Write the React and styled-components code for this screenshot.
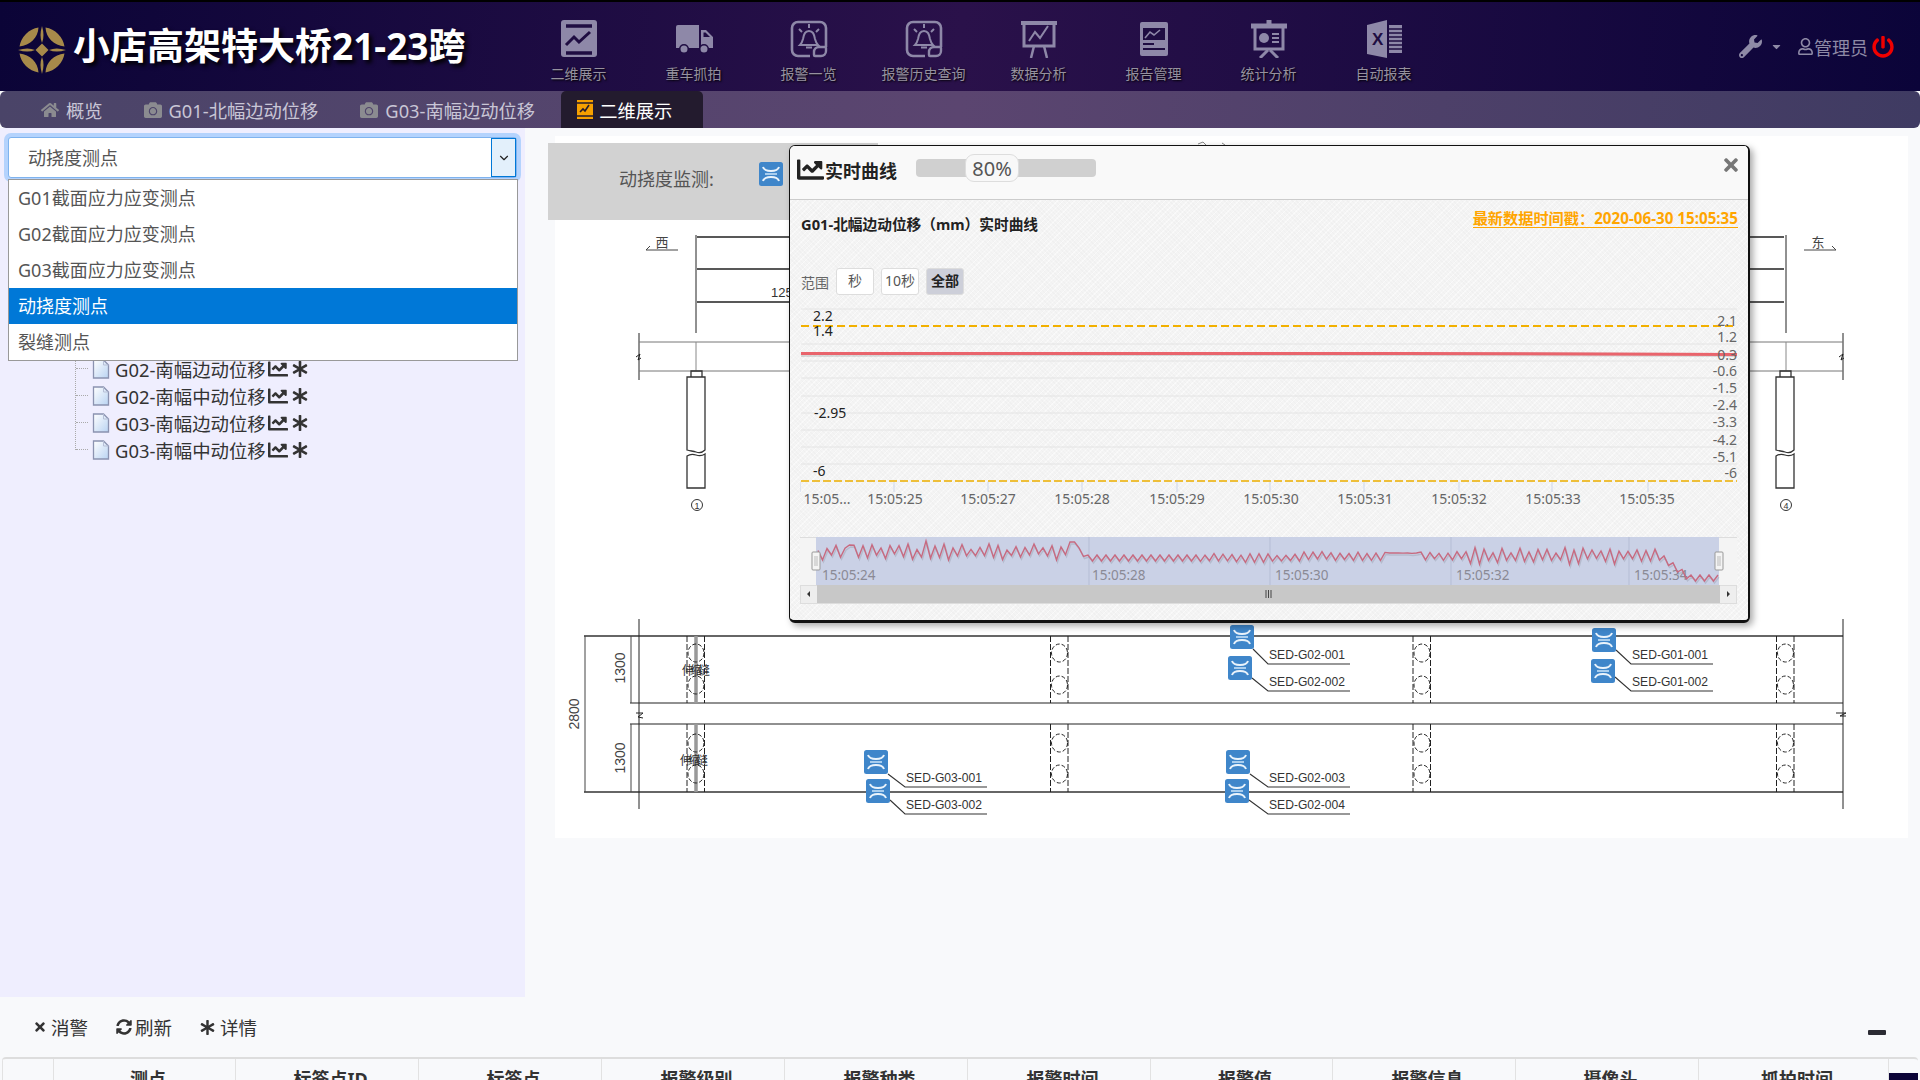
import React from "react";
import styled, { createGlobalStyle } from "styled-components";
import { FaHome, FaCamera, FaWrench, FaCaretDown, FaRegUser, FaPowerOff, FaChartLine, FaAsterisk, FaTimes, FaSyncAlt } from "react-icons/fa";
import { ChevronDown } from "lucide-react";

const FONT = `"Noto Sans", "Noto Sans CJK SC", sans-serif`;

const Global = createGlobalStyle`
  html, body { margin: 0; padding: 0; height: 100%; overflow: hidden; background: #f8f9fb; }
  body { font-family: ${FONT}; color: #333; }
  * { box-sizing: border-box; }
`;

const Page = styled.div`
  width: 1920px; height: 1080px; overflow: hidden; display: flex; flex-direction: column; background: #f8f9fb;
`;
const Header = styled.header`
  height: 91px; flex: none; border-top: 2px solid #000; display: flex; align-items: flex-start;
  background: linear-gradient(95deg, #0b0437 0%, #2a114a 50%, #0b0439 100%);
`;
const Brand = styled.div`
  width: 561px; flex: none; display: flex; align-items: center; gap: 7px; padding: 24px 0 0 18px;
`;
const Title = styled.h1`
  margin: -9px 0 0; font-size: 37px; line-height: 42px; font-weight: 700; color: #fff; white-space: nowrap;
  text-shadow: 3px 3px 4px #000;
`;
const Nav = styled.nav`
  display: flex; flex: none;
`;
const NavItem = styled.div`
  width: 115px; height: 89px; display: flex; flex-direction: column; align-items: center; padding-top: 18px; margin-left: ${p => p.$first ? "-40px" : "0"};
  color: #8e88a8;
`;
const NavLabel = styled.span`
  margin-top: 6px; font-size: 14px; line-height: 20px; color: #96919f; text-shadow: 1px 1px 2px #000; white-space: nowrap;
`;
const UserArea = styled.div`
  margin-left: auto; display: flex; align-items: center; height: 89px; padding: 0 26px 0 0; color: #8e8aa6;
`;
const Caret = styled.span`
  display: flex; margin: 0 14px 0 8px; font-size: 13px; color: #8e8aa6;
`;
const UserName = styled.span`
  font-size: 18px; margin-right: 4px; color: #8e8aa6;
`;
const TabBar = styled.div`
  height: 37px; flex: none; display: flex; align-items: stretch; padding-left: 41px; border-radius: 6px;
  background: linear-gradient(95deg, #4a4468 0%, #5b4570 50%, #3f3b62 100%);
`;
const Tab = styled.div`
  display: flex; align-items: center; font-size: 18.3px; gap: 7px; color: #c9c6d6; white-space: nowrap;
  margin-left: ${p => p.$ml || 0}px;
`;
const TabIcon = styled.span`
  display: flex; color: #8b8b90; font-size: 18px;
`;
const ActiveTab = styled.div`
  width: 142px; display: flex; align-items: center; gap: 6px; padding-left: 16px; font-size: 18.3px; color: #fff;
  background: #231b2e; border-radius: 5px 5px 0 0; margin-left: 26px;
`;
const Body = styled.div`
  height: 869px; flex: none; display: flex;
`;
const Left = styled.aside`
  width: 525px; flex: none; background: #efeefe; position: relative; padding: 9px 8px 0 8px;
`;
const SelectBox = styled.div`
  height: 41px; width: 509px; background: #fff; border: 1px solid #7fb3ee; border-radius: 3px; box-shadow: 0 0 0 4px #b4d3fd;
  display: flex; align-items: center; justify-content: space-between; padding: 0 0 2px 19px; font-size: 18px; color: #555;
`;
const SelectArrow = styled.span`
  width: 25px; height: 39px; margin-bottom: -2px; background: #e3f0fb; border: 1px solid #0078d7; display: flex; align-items: center; justify-content: center; color: #222;
`;
const Dropdown = styled.ul`
  position: absolute; left: 8px; top: 51px; width: 510px; margin: 0; padding: 0; list-style: none; background: #fff; border: 1px solid #999; z-index: 3;
`;
const Option = styled.li`
  height: 36px; line-height: 36px; padding-left: 9px; font-size: 18px; color: ${p => p.$selected ? "#fff" : "#555"};
  background: ${p => p.$selected ? "#0078d7" : "#fff"};
`;
const Tree = styled.ul`
  list-style: none; margin: 177px 0 0; padding: 0 0 0 67px; position: relative;
  &::before { content: ""; position: absolute; left: 67px; top: -10px; bottom: 13px; border-left: 1px dotted #aaa; }
`;
const TreeRow = styled.li`
  height: 27px; display: flex; align-items: center; padding-left: 17px; position: relative; font-size: 18.4px; color: #333; white-space: nowrap;
  &::before { content: ""; position: absolute; left: 1px; top: 13px; width: 12px; border-top: 1px dotted #aaa; }
`;
const TreeLabel = styled.span`
  margin: 0 2px 0 5px;
`;
const TreeAction = styled.span`
  display: flex; margin-left: ${p => p.$ml || 0}px; font-size: ${p => p.$size}px; color: #333;
`;
const Main = styled.main`
  flex: 1; position: relative; padding: 8px 12px 0 30px;
`;
const Drawing = styled.div`
  width: 1353px; height: 702px; background: #fff;
  svg { display: block; }
`;
const MonitorBar = styled.div`
  position: absolute; left: 23px; top: 15px; width: 330px; height: 77px; background: #d2d2d2; display: flex; align-items: flex-start; padding: 19px 0 0 71px; gap: 45px; font-size: 18px; color: #555;
`;
const MonitorLabel = styled.span`
  margin-top: 5px; line-height: 25px;
`;
const Modal = styled.section`
  position: absolute; left: 264px; top: 17px; width: 961px; height: 478px; z-index: 2; background: #f4f4f4;
  border: 1px solid #111; border-right-width: 2px; border-bottom-width: 3px; border-radius: 6px; overflow: hidden;
  box-shadow: 3px 3px 7px rgba(0,0,0,.35);
`;
const ModalWrap = styled.div`
  height: 100%; display: flex; flex-direction: column;
`;
const ModalHeader = styled.div`
  height: 54px; flex: none; background: #f9f9f9; border-bottom: 1px solid #ccc; display: flex; align-items: center; padding: 0 9px 6px 7px; position: relative;
`;
const ModalTitle = styled.div`
  display: flex; align-items: center; gap: 1px; font-size: 18px; font-weight: 700; color: #222; width: 119px;
`;
const SliderTrack = styled.div`
  width: 180px; height: 18px; background: #d0d0d0; border-radius: 4px; position: relative; margin-top: -3px;
`;
const SliderThumb = styled.div`
  position: absolute; left: 49px; top: -5px; width: 54px; height: 28px; background: #f8f8f8; border: 1px solid #ddd; border-radius: 9px;
  text-align: center; font-size: 20px; line-height: 27px; color: #555;
`;
const Close = styled.span`
  position: absolute; right: 7px; top: 9px; display: flex; color: #777; font-size: 20px;
`;
const ModalBody = styled.div`
  flex: 1; padding: 0 10px 0 11px;
  background-color: #f4f4f4;
  background-image: repeating-linear-gradient(45deg, rgba(0,0,0,.014) 0 1px, transparent 1px 3px), repeating-linear-gradient(-45deg, rgba(255,255,255,.5) 0 1px, transparent 1px 4px);
`;
const TitleRow = styled.div`
  display: flex; justify-content: space-between; height: 24px; margin-top: 8px;
`;
const ChartTitle = styled.div`
  font-size: 14.7px; font-weight: 700; color: #222; line-height: 32px; white-space: nowrap;
`;
const Stamp = styled.div`
  font-size: 15.2px; font-weight: 700; color: #ffa500; border-bottom: 1px solid #ffa500; line-height: 18px; height: 19px; margin-top: 1px; white-space: nowrap;
`;
const RangeRow = styled.div`
  display: flex; align-items: center; gap: 7px; height: 27px; margin-top: 36px; font-size: 14px; color: #666;
`;
const RangeButton = styled.span`
  width: 38px; height: 27px; border: 1px solid #ddd; border-radius: 3px; display: flex; align-items: center; justify-content: center; padding-bottom: 3px;
  background: ${p => p.$on ? "#cdcfd9" : "#fff"}; font-weight: ${p => p.$on ? 700 : 400}; color: ${p => p.$on ? "#222" : "#555"};
`;
const ChartBox = styled.div`
  margin: 5px 0 0 -1px;
  svg { display: block; }
`;
const Toolbar = styled.div`
  height: 60px; flex: none; position: relative; display: flex; align-items: center; padding: 0 0 0 33px; font-size: 18.5px; color: #333;
`;
const ToolButton = styled.span`
  display: flex; align-items: center; gap: ${p => p.$gap}px; margin-right: 28px;
`;
const Minimize = styled.span`
  position: absolute; right: 34px; top: 33px; width: 18px; height: 5px; background: #2b2b33; border-radius: 1px;
`;
const TableHead = styled.div`
  flex: none; height: 30px; margin: 0 2px; border-top: 2px solid #ddd; border-radius: 4px 4px 0 0; display: flex; position: relative; overflow: hidden;
`;
const Corner = styled.div`
  width: 52px; flex: none; border-right: 1px solid #e2e2e2; border-left: 1px solid #e2e2e2;
`;
const HeadCell = styled.div`
  width: ${p => p.$w}px; flex: none; border-right: 1px solid #e2e2e2; text-align: center; font-size: 18px; font-weight: 700; color: #333; line-height: 26px; padding: 7px 0 0 7px; height: 40px;
`;
const ScrollStub = styled.div`
  width: 29px; flex: none; background: #0b0437; margin-top: 14px;
`;

const NavIcon = ({ children }) => (
  <svg width="40" height="38" viewBox="0 0 40 38">{children}</svg>
);
const C = "#8e88a8", D = "#1f0d42";
const BellIcon = () => (
  <NavIcon>
    <path d="M21 36H9a6 6 0 0 1-6-6V8a6 6 0 0 1 6-6h22a6 6 0 0 1 6 6v19" fill="none" stroke={C} strokeWidth="2.6" />
    <path d="M26 36a1 1 0 0 1-1-1v-3a5 5 0 0 1 5-5h6a1 1 0 0 1 1 1v3a5 5 0 0 1-5 5z" fill="none" stroke={C} strokeWidth="2.4" />
    <path d="M20 11c-4 0-5 3-6 8-1 4-2 5-3 6h18c-1-1-2-2-3-6-1-5-2-8-6-8z" fill="none" stroke={C} strokeWidth="2" />
    <path d="M17 27.500h6M20 4v4M10 9l3 3M30 9l-3 3" stroke={C} strokeWidth="2" fill="none" />
  </NavIcon>
);
const Icons = [
  <NavIcon key="1"><rect x="2" y="0" width="36" height="37" rx="3" fill={C} /><path d="M7 6h26M7 33h26" stroke={D} strokeWidth="3.4" /><path d="M7 25l8-8 5 5 11-10" fill="none" stroke={D} strokeWidth="3" /></NavIcon>,
  <NavIcon key="2"><path d="M4 5h21v23H2V7a2 2 0 0 1 2-2zM27 10h5l7 7v11H27z" fill={C} /><circle cx="10" cy="29" r="4.300" fill={C} stroke={D} strokeWidth="1.6" /><circle cx="30" cy="29" r="4.300" fill={C} stroke={D} strokeWidth="1.6" /><path d="M29.500 12.500h2l4.500 4.500h-6.500z" fill={D} /></NavIcon>,
  <BellIcon key="3" />,
  <BellIcon key="4" />,
  <NavIcon key="5"><path d="M2 3h36" stroke={C} strokeWidth="4" /><path d="M5 5v21h30V5" fill="none" stroke={C} strokeWidth="3" /><path d="M10 21l6-9 5 6 8-12" fill="none" stroke={C} strokeWidth="2" /><path d="M15 26l-3 12M25 26l3 12" stroke={C} strokeWidth="2.5" /></NavIcon>,
  <NavIcon key="6"><rect x="6" y="2" width="28" height="34" rx="2" fill={C} /><rect x="9" y="8" width="22" height="12" fill={D} /><path d="M11 18l5-6 4 3 6-5" fill="none" stroke={C} strokeWidth="1.6" /><path d="M9 24h11M9 29h22" stroke={D} strokeWidth="2.2" /></NavIcon>,
  <NavIcon key="7"><path d="M20 0v5M2 6h36" stroke={C} strokeWidth="5" /><path d="M6 8v21h28V8" fill="none" stroke={C} strokeWidth="3" /><circle cx="15" cy="18" r="5" fill={C} /><path d="M23 14h7M23 18h7M23 22h7" stroke={C} strokeWidth="1.8" /><path d="M19 30l-8 8M21 30l8 8" stroke={C} strokeWidth="3" /></NavIcon>,
  <NavIcon key="8"><path d="M3 5l20-5v38l-20-4z" fill={C} /><path d="M25 5h13v28H25z" fill={C} /><path d="M25 9h13M25 13h13M25 17h13M25 21h13M25 25h13M25 29h13" stroke={D} strokeWidth="1.4" /><text x="8" y="25" fontFamily="Liberation Sans, sans-serif" fontSize="17" fontWeight="700" fill={D}>X</text></NavIcon>,
];
const NAV = ["二维展示", "重车抓拍", "报警一览", "报警历史查询", "数据分析", "报告管理", "统计分析", "自动报表"];

const LogoMark = () => (
  <svg width="48" height="48" viewBox="0 0 48 48">
    <g fill="#a78a4a">
      <path d="M20.500 1.500A23 23 0 0 0 1.500 20.500C12 19.500 20 12 20.500 1.500zM27.500 1.500A23 23 0 0 1 46.500 20.500C36 19.500 28 12 27.500 1.500zM20.500 46.500A23 23 0 0 1 1.500 27.500C12 28.500 20 36 20.500 46.500zM27.500 46.500A23 23 0 0 0 46.500 27.500C36 28.500 28 36 27.500 46.500z" />
      <path d="M24 0q3 10 0 17q-3-7 0-17zM24 48q3-10 0-17q-3 7 0 17zM0 24q10-3 17 0q-7 3-17 0zM48 24q-10-3-17 0q7 3 17 0z" />
      <path d="M24 17.500l6.500 6.500-6.500 6.500-6.500-6.500z" />
    </g>
  </svg>
);

const PhoneChart = () => (
  <svg width="16" height="19" viewBox="0 0 16 19">
    <rect width="16" height="19" fill="#f6a000" /><path d="M0 3h16M0 16h16" stroke="#231b2e" strokeWidth="1.4" /><path d="M3 12l3-3 2 2 4-6" fill="none" stroke="#231b2e" strokeWidth="1.6" />
  </svg>
);
const FileIcon = () => (
  <svg width="18" height="20" viewBox="0 0 18 20">
    <defs><linearGradient id="fg" x1="0" y1="0" x2="1" y2="1"><stop offset="0" stopColor="#fff" /><stop offset="1" stopColor="#b9d3f2" /></linearGradient></defs>
    <path d="M1.500 1h10l5 5v13h-15z" fill="url(#fg)" stroke="#8b93b0" strokeWidth="1.3" />
    <path d="M11.500 1v5h5" fill="none" stroke="#b7bfd6" />
  </svg>
);

const Sensor = ({ x, y, w = 24, h = 24 }) => (
  <g transform={`translate(${x} ${y})`}>
    <rect width={w} height={h} rx="2.500" fill="#3f86ca" />
    <path d={`M4 5c1 3 3 4 ${w / 2 - 4} 4s${w / 2 - 5}-1 ${w / 2 - 4}-4M4 ${h - 5}c1-3 3-4 ${w / 2 - 4}-4s${w / 2 - 5} 1 ${w / 2 - 4} 4`} fill="none" stroke="#eaf3fb" strokeWidth="2" />
    <path d={`M6 ${h / 2}h${w - 12}`} stroke="#a8cdee" strokeWidth="2" />
  </g>
);

const SENSORS = [
  { x: 864, y: 750, lx: 888, ly: 774, ty: 787, tx: 905, label: "SED-G03-001" },
  { x: 866, y: 779, lx: 890, ly: 800, ty: 814, tx: 905, label: "SED-G03-002" },
  { x: 1230, y: 625, lx: 1253, ly: 649, ty: 664, tx: 1268, label: "SED-G02-001" },
  { x: 1228, y: 656, lx: 1252, ly: 678, ty: 691, tx: 1268, label: "SED-G02-002" },
  { x: 1226, y: 750, lx: 1250, ly: 774, ty: 787, tx: 1268, label: "SED-G02-003" },
  { x: 1225, y: 779, lx: 1249, ly: 800, ty: 814, tx: 1268, label: "SED-G02-004" },
  { x: 1592, y: 628, lx: 1616, ly: 650, ty: 664, tx: 1631, label: "SED-G01-001" },
  { x: 1591, y: 659, lx: 1615, ly: 677, ty: 691, tx: 1631, label: "SED-G01-002" },
];

const Column = ({ x, joint }) => (
  <g fill="none">
    <path d={`M${x - 9} 636V703M${x + 8.5} 636V703M${x - 9} 724V792M${x + 8.5} 724V792`} stroke="#222" strokeWidth="1" strokeDasharray="6 2" />
    {joint && <path d={`M${x} 636V703M${x} 724V792`} stroke="#999" strokeWidth="3.5" />}
    {[653, 685, 743, 774].map(y => <ellipse key={y} cx={x} cy={y} rx="8" ry="9" stroke="#222" strokeDasharray="4 2" />)}
  </g>
);
const Pile = ({ x }) => (
  <g fill="none" stroke="#333" strokeWidth="1.3">
    <path d={`M${x - 5} 377v-6h11v6`} />
    <path d={`M${x - 9} 450V377h18v73c-3 3-6 3-9 2s-6-1-9-2zM${x - 9} 456c3-2 6-2 9-1s6 1 9-1v34h-18z`} fill="#fff" />
    <circle cx={x + 1} cy="505" r="5.500" strokeWidth="1" />
    <text x={x + 1} y="508.500" fontSize="9" textAnchor="middle" fontFamily="Liberation Sans, sans-serif" fill="#333" stroke="none">{x < 1000 ? "1" : "4"}</text>
  </g>
);

const Blueprint = () => (
  <svg width="1353" height="702" viewBox="555 136 1353 702">
    <g fill="none" stroke="#222" strokeWidth="1">
      <path d="M646 250h32M646 250l4-4" stroke="#444" />
      <path d="M1804 250h32M1836 250l-4-4" stroke="#444" />
      <path d="M696 235V333M1786 235V333" />
      <path d="M697 237H790M697 269H790M697 302H790M1749 237H1784M1749 269H1784M1749 302H1784" strokeWidth="1.3" />
      <path d="M639 333V380M1843 333V380" />
      <path d="M639 342H790M639 371H790M1749 342H1843M1749 371H1843" stroke="#777" />
      <path d="M696 342V371M1786 342V371" stroke="#888" />
      <path d="M636 357l4-3-2 6 3-2M1839 357l4-3-2 6 3-2" />
      <path d="M1198 144l5-2 3 3M1222 143l3 2" stroke="#888" />
    </g>
    <text x="662" y="247" fontSize="13" textAnchor="middle" fontFamily="Noto Sans CJK SC, sans-serif" fill="#444">西</text>
    <text x="1818" y="247" fontSize="13" textAnchor="middle" fontFamily="Noto Sans CJK SC, sans-serif" fill="#444">东</text>
    <text x="771" y="297" fontSize="13" fontFamily="Liberation Sans, sans-serif" fill="#333">125</text>
    <Pile x={696} />
    <Pile x={1785} />

    <g fill="none">
      <path d="M584 636H1843M584 792H1843" stroke="#666" strokeWidth="2" />
      <path d="M630 703H1843M630 724H1843" stroke="#222" strokeWidth="1.2" />
      <path d="M639 619V809M1843 619V809" stroke="#222" />
      <path d="M585 636V792M631 636V703M631 724V792" stroke="#444" />
      <path d="M636 713h7l-5 4 5 1M1836 713h10l-6 3h6" stroke="#222" />
    </g>
    <Column x={696} joint />
    <Column x={1059.5} />
    <Column x={1422} />
    <Column x={1785.5} />
    <g fontFamily="Liberation Sans, sans-serif" fontSize="14" fill="#444">
      <text transform="translate(625 668) rotate(-90)" textAnchor="middle">1300</text>
      <text transform="translate(625 758) rotate(-90)" textAnchor="middle">1300</text>
      <text transform="translate(579 714) rotate(-90)" textAnchor="middle">2800</text>
    </g>
    <g fontFamily="Noto Sans CJK SC, sans-serif" fontSize="12" fill="#333">
      <text x="682" y="675" textLength="28" lengthAdjust="spacing">伸缩缝</text>
      <text x="680" y="765" textLength="28" lengthAdjust="spacing">伸缩缝</text>
    </g>
    {SENSORS.map(s => (
      <g key={s.label}>
        <path d={`M${s.lx} ${s.ly}L${s.tx} ${s.ty}h${82}`} fill="none" stroke="#333" strokeWidth="1.1" />
        <text x={s.tx + 1} y={s.ty - 5} fontFamily="Liberation Sans, sans-serif" fontSize="13.5" fill="#333" textLength="76" lengthAdjust="spacingAndGlyphs">{s.label}</text>
        <Sensor x={s.x} y={s.y} />
      </g>
    ))}
  </svg>
);

const GRID = [309, 344, 361, 378, 396, 413, 430, 447, 464];
const RIGHT = [["2.1", 326], ["1.2", 342], ["0.3", 360], ["-0.6", 376], ["-1.5", 393], ["-2.4", 410], ["-3.3", 427], ["-4.2", 445], ["-5.1", 462], ["-6", 478]];
const TICKS = [[800, "15:05...", 827], [894, "15:05:25", 895], [988, "15:05:27", 988], [1082, "15:05:28", 1082], [1177, "15:05:29", 1177], [1270, "15:05:30", 1271], [1364, "15:05:31", 1365], [1459, "15:05:32", 1459], [1552, "15:05:33", 1553], [1648, "15:05:35", 1647]];
const NAV_LABELS = [["15:05:24", 822], ["15:05:28", 1092], ["15:05:30", 1275], ["15:05:32", 1456], ["15:05:34", 1634]];

const navPath = () => {
  const pts = [];
  let seed = 7;
  const rnd = () => { seed = (seed * 16807) % 2147483647; return seed / 2147483647; };
  for (let x = 818, i = 0; x <= 1719; x += 4.5, i++) {
    const r = rnd();
    const amp = x < 1085 ? 1.5 + r * 7 : x < 1200 ? 3 : x < 1470 ? 2.5 + r * 2 : x < 1660 ? 1.5 + r * 7 : 3;
    const base = x < 1085 ? 552 : x < 1300 ? 558 : x < 1660 ? 556 : 556 + Math.min(22, (x - 1660) * 0.75);
    let y = base + (i % 2 ? amp : -amp);
    if (Math.abs(x - 927) < 3) y = 541;
    if (Math.abs(x - 1072) < 3) y = 542;
    if (Math.abs(x - 848) < 3) y = 545;
    if (x > 1385 && x < 1420 && i % 2) y = 553;
    pts.push(`${x.toFixed(1)} ${y.toFixed(1)}`);
  }
  return "M" + pts.join("L");
};

const Chart = () => {
  const d = navPath();
  return (
    <svg width="940" height="305" viewBox="800 300 940 305">
      {GRID.map(y => <path key={y} d={`M801 ${y}H1737`} stroke="#e4e4e4" />)}
      <path d="M801 326H1737" stroke="#f2b000" strokeWidth="2" strokeDasharray="8 4" />
      <path d="M801 481H1737" stroke="#eebf3a" strokeWidth="2" strokeDasharray="8 3" />
      <path d="M801 355L1100 354L1400 354L1737 355" fill="none" stroke="#000" strokeOpacity=".12" strokeWidth="4" />
      <path d="M801 353.500L1100 353.500L1400 353.500L1737 354.500" fill="none" stroke="#e9646c" strokeWidth="3" />
      <g fontFamily="Noto Sans, sans-serif" fontSize="14" fill="#222">
        <text x="813" y="321">2.2</text>
        <text x="813" y="336">1.4</text>
        <text x="814" y="418">-2.95</text>
        <text x="813" y="476">-6</text>
      </g>
      <g fontFamily="Noto Sans, sans-serif" fontSize="14" fill="#666" textAnchor="end">
        {RIGHT.map(([t, y]) => <text key={t} x="1737" y={y}>{t}</text>)}
      </g>
      {TICKS.map(([x, t, c]) => (
        <g key={t}>
          <path d={`M${x} 482V492`} stroke="#ccd6eb" />
          <text x={c} y="504" textAnchor="middle" fontFamily="Noto Sans, sans-serif" fontSize="14" fill="#666">{t}</text>
        </g>
      ))}
      <rect x="800" y="537" width="937" height="48" fill="#f4f4f4" />
      <path d="M800 537.500H1737" stroke="#ddd" />
      <rect x="816" y="537" width="903" height="48" fill="#cad1e6" />
      {[1089, 1270, 1451, 1629].map(x => <path key={x} d={`M${x} 537V585`} stroke="#b5bdd5" />)}
      {NAV_LABELS.map(([t, x]) => <text key={t} x={x} y="580" fontFamily="Noto Sans, sans-serif" fontSize="13.5" fill="#8a8a95">{t}</text>)}
      <path d={d} transform="translate(1 2)" fill="none" stroke="#000" strokeOpacity=".1" strokeWidth="1.5" />
      <path d={d} fill="none" stroke="#c76a80" strokeWidth="1.4" />
      {[812, 1715].map(x => (
        <g key={x}>
          <rect x={x} y="552" width="8" height="18" rx="1" fill="#f4f4f4" stroke="#999" />
          <path d={`M${x + 3} 556v10M${x + 5} 556v10`} stroke="#bbb" />
        </g>
      ))}
      <rect x="800.500" y="585.500" width="936" height="18" fill="#eee" stroke="#ddd" />
      <rect x="817" y="585" width="903" height="18" fill="#c8c8c8" />
      <path d="M1266 590v8M1268.500 590v8M1271 590v8" stroke="#444" />
      <path d="M810 591v6l-3-3zM1727 591v6l3-3z" fill="#333" />
    </svg>
  );
};

const HEADS = [["测点", 182], ["标签点ID", 183], ["标签点", 183], ["报警级别", 183], ["报警种类", 183], ["报警时间", 183], ["报警值", 182], ["报警信息", 183], ["摄像头", 183], ["抓拍时间", 190]];
const TREE = ["G02-南幅边动位移", "G02-南幅中动位移", "G03-南幅边动位移", "G03-南幅中动位移"];
const OPTIONS = ["G01截面应力应变测点", "G02截面应力应变测点", "G03截面应力应变测点", "动挠度测点", "裂缝测点"];

export default function App() {
  return (
    <Page>
      <Global />
      <Header>
        <Brand>
          <LogoMark />
          <Title>小店高架特大桥21-23跨</Title>
        </Brand>
        <Nav>
          {NAV.map((n, i) => (
            <NavItem key={n} $first={i === 0}>
              {Icons[i]}
              <NavLabel>{n}</NavLabel>
            </NavItem>
          ))}
        </Nav>
        <UserArea>
          <FaWrench size={23} />
          <Caret><FaCaretDown /></Caret>
          <FaRegUser size={17} />
          <UserName>管理员</UserName>
          <FaPowerOff size={22} color="#f00000" />
        </UserArea>
      </Header>
      <TabBar>
        <Tab><TabIcon><FaHome /></TabIcon>概览</Tab>
        <Tab $ml={41}><TabIcon><FaCamera /></TabIcon>G01-北幅边动位移</Tab>
        <Tab $ml={42}><TabIcon><FaCamera /></TabIcon>G03-南幅边动位移</Tab>
        <ActiveTab><PhoneChart />二维展示</ActiveTab>
      </TabBar>
      <Body>
        <Left>
          <SelectBox>
            动挠度测点
            <SelectArrow><ChevronDown size={14} /></SelectArrow>
          </SelectBox>
          <Dropdown>
            {OPTIONS.map(o => <Option key={o} $selected={o === "动挠度测点"}>{o}</Option>)}
          </Dropdown>
          <Tree>
            {TREE.map(t => (
              <TreeRow key={t}>
                <FileIcon />
                <TreeLabel>{t}</TreeLabel>
                <TreeAction $size={20}><FaChartLine /></TreeAction>
                <TreeAction $ml={4} $size={16}><FaAsterisk /></TreeAction>
              </TreeRow>
            ))}
          </Tree>
        </Left>
        <Main>
          <Drawing><Blueprint /></Drawing>
          <MonitorBar>
            <MonitorLabel>动挠度监测:</MonitorLabel>
            <svg width="24" height="24" viewBox="0 0 24 24"><Sensor x={0} y={0} /></svg>
          </MonitorBar>
          <Modal>
            <ModalWrap>
              <ModalHeader>
                <ModalTitle><FaChartLine size={27} />实时曲线</ModalTitle>
                <SliderTrack><SliderThumb>80%</SliderThumb></SliderTrack>
                <Close><FaTimes /></Close>
              </ModalHeader>
              <ModalBody>
                <TitleRow>
                  <ChartTitle>G01-北幅边动位移（mm）实时曲线</ChartTitle>
                  <Stamp>最新数据时间戳：2020-06-30 15:05:35</Stamp>
                </TitleRow>
                <RangeRow>
                  范围
                  <RangeButton>秒</RangeButton>
                  <RangeButton>10秒</RangeButton>
                  <RangeButton $on>全部</RangeButton>
                </RangeRow>
                <ChartBox><Chart /></ChartBox>
              </ModalBody>
            </ModalWrap>
          </Modal>
        </Main>
      </Body>
      <Toolbar>
        <ToolButton $gap={4}><FaTimes size={14} />消警</ToolButton>
        <ToolButton $gap={3}><FaSyncAlt size={16} />刷新</ToolButton>
        <ToolButton $gap={5}><FaAsterisk size={15} />详情</ToolButton>
        <Minimize />
      </Toolbar>
      <TableHead>
        <Corner />
        {HEADS.map(([h, w]) => <HeadCell key={h} $w={w}>{h}</HeadCell>)}
        <ScrollStub />
      </TableHead>
    </Page>
  );
}
